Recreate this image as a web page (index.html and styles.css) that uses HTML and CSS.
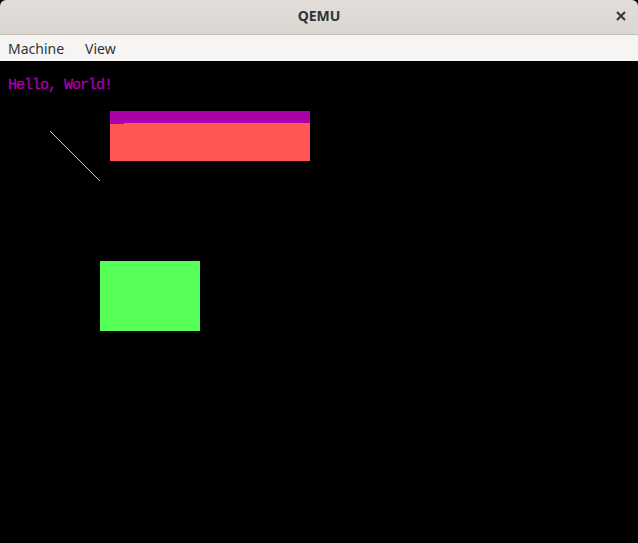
FILE: index.html
```html
<!DOCTYPE html>
<html>
<head>
<meta charset="utf-8">
<link rel="stylesheet" href="styles.css">
</head>
<body>
<div class="window">
  <div class="titlebar">
    <span class="title">QEMU</span>
    <span class="close">
      <svg width="10" height="10" viewBox="0 0 10 10"><path d="M1 1 L9 9 M9 1 L1 9" stroke="#2e3436" stroke-width="2"/></svg>
    </span>
  </div>
  <div class="menubar">
    <span class="menu">Machine</span>
    <span class="menu">View</span>
  </div>
  <div class="screen">
    <div class="hello">Hello, World!</div>
    <div class="bar-red"></div>
    <div class="bar-purple"></div>
    <div class="notch"></div>
    <svg class="line" width="60" height="60" viewBox="0 0 60 60"><line x1="0.5" y1="0.5" x2="50.5" y2="50.5" stroke="#55ffff" stroke-width="1" shape-rendering="crispEdges"/></svg>
    <div class="green"></div>
  </div>
</div>
</body>
</html>
```
FILE: styles.css
```css
html, body {
  margin: 0;
  padding: 0;
  width: 638px;
  height: 543px;
  overflow: hidden;
  background: #000;
}
.window {
  display: flex;
  flex-direction: column;
  height: 543px;
}
.titlebar {
  height: 34px;
  background: linear-gradient(#e1deda, #dad6d2);
  border-bottom: 1px solid #c6bfb8;
  display: flex;
  align-items: center;
  justify-content: center;
  position: relative;
  font-family: "Noto Sans", sans-serif;
  border-radius: 6px 6px 0 0;
}
.title {
  font-weight: bold;
  font-size: 14px;
  color: #2e3436;
  margin-top: -3px;
}
.close {
  position: absolute;
  right: 12px;
  top: 11px;
  width: 10px;
  height: 10px;
  display: flex;
}
.menubar {
  height: 26px;
  background: #f6f5f4;
  display: flex;
  align-items: center;
  gap: 21px;
  padding-left: 8px;
  font-family: "Noto Sans", sans-serif;
  font-size: 14px;
  color: #2e3436;
}
.screen {
  flex: 1;
  background: #000;
  position: relative;
}
.hello {
  position: absolute;
  left: 8px;
  top: 17px;
  height: 16px;
  line-height: 16px;
  font-family: "Liberation Mono", monospace;
  font-size: 15px;
  letter-spacing: -1px;
  color: #aa00aa;
  white-space: pre;
  -webkit-text-stroke: 0.3px #aa00aa;
}
.bar-purple {
  position: absolute;
  left: 110px;
  top: 50px;
  width: 200px;
  height: 12px;
  background: #aa00aa;
}
.notch {
  position: absolute;
  left: 110px;
  top: 62px;
  width: 14px;
  height: 1px;
  background: #aa00aa;
}
.bar-red {
  position: absolute;
  left: 110px;
  top: 62px;
  width: 200px;
  height: 38px;
  background: #ff5555;
}
.line {
  position: absolute;
  left: 50px;
  top: 70px;
}
.green {
  position: absolute;
  left: 100px;
  top: 200px;
  width: 100px;
  height: 70px;
  background: #55ff55;
}
```
